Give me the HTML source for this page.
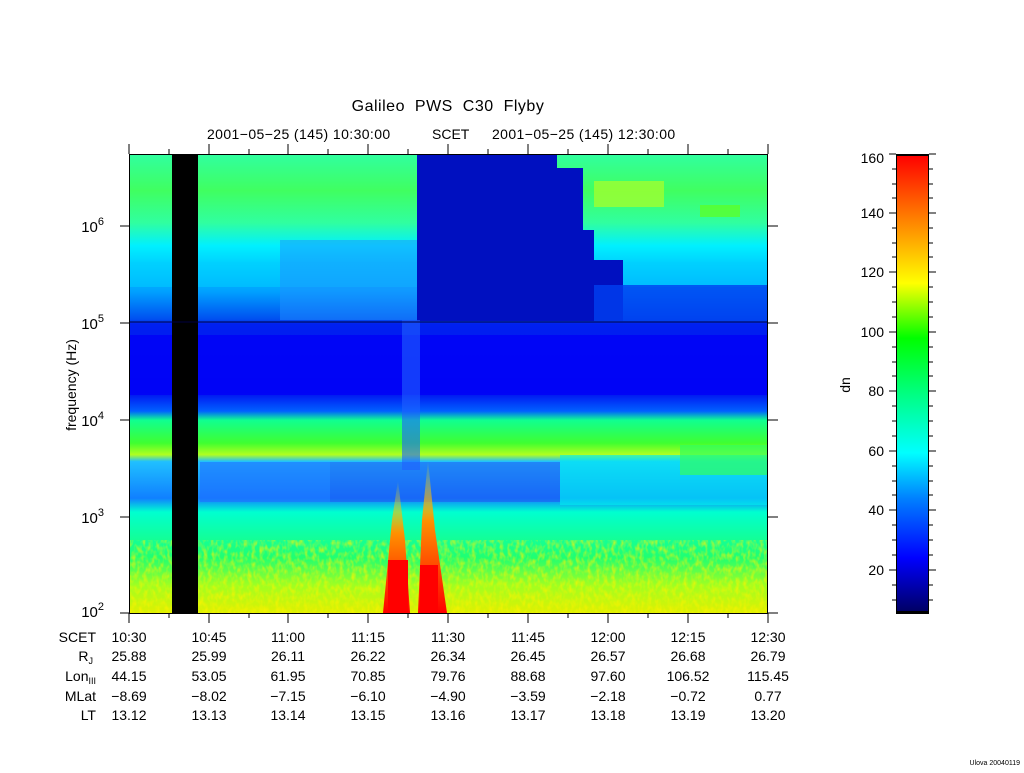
<!DOCTYPE html>
<html><head><meta charset="utf-8"><style>
body{margin:0;background:#fff;width:1024px;height:768px;overflow:hidden;font-family:"Liberation Sans",sans-serif}
svg text{font-family:"Liberation Sans",sans-serif}
</style></head><body>
<svg width="1024" height="768" viewBox="0 0 1024 768" font-size="14">
<defs>
<linearGradient id="cb" x1="0" y1="1" x2="0" y2="0">
<stop offset="0" stop-color="#000060"/>
<stop offset="0.12" stop-color="#0000ff"/>
<stop offset="0.25" stop-color="#0080ff"/>
<stop offset="0.35" stop-color="#00ffff"/>
<stop offset="0.48" stop-color="#00ff80"/>
<stop offset="0.6" stop-color="#00ff00"/>
<stop offset="0.72" stop-color="#ffff00"/>
<stop offset="0.86" stop-color="#ff8000"/>
<stop offset="1" stop-color="#ff0000"/>
</linearGradient>
<linearGradient id="main" x1="0" y1="0" x2="0" y2="1">
<stop offset="0" stop-color="#30ffa0"/>
<stop offset="0.08" stop-color="#40ff60"/>
<stop offset="0.15" stop-color="#30ffa0"/>
<stop offset="0.2" stop-color="#00f0ff"/>
<stop offset="0.3" stop-color="#00a0ff"/>
<stop offset="0.36" stop-color="#0050f0"/>
<stop offset="0.37" stop-color="#0020f0"/>
<stop offset="0.52" stop-color="#0010f0"/>
<stop offset="0.56" stop-color="#0060ff"/>
<stop offset="0.58" stop-color="#10ff90"/>
<stop offset="0.63" stop-color="#40ff30"/>
<stop offset="0.655" stop-color="#b0ff20"/>
<stop offset="0.67" stop-color="#20c0ff"/>
<stop offset="0.75" stop-color="#1080ff"/>
<stop offset="0.78" stop-color="#00ffd0"/>
<stop offset="0.88" stop-color="#20ff70"/>
<stop offset="0.94" stop-color="#a0ff20"/>
<stop offset="1" stop-color="#e0f000"/>
</linearGradient>
<linearGradient id="red" x1="0" y1="0" x2="0" y2="1">
<stop offset="0" stop-color="#ffff00" stop-opacity="0"/>
<stop offset="0.4" stop-color="#ff9000"/>
<stop offset="1" stop-color="#ff0000"/>
</linearGradient>
<filter id="n" filterUnits="userSpaceOnUse" x="129" y="540" width="639" height="73"><feTurbulence type="fractalNoise" baseFrequency="0.25 0.15" numOctaves="2" seed="3"/><feColorMatrix values="0 0 0 0 1  0 0 0 0 0.9  0 0 0 0 0  0 0 0 1.4 -0.55"/></filter>
<clipPath id="pc"><rect x="129" y="154" width="639" height="459"/></clipPath>
</defs>
<g clip-path="url(#pc)">
<rect x="129" y="154" width="639" height="459" fill="url(#main)"/>
<rect x="129" y="262" width="639" height="25" fill="#00d0ff" opacity="0.5"/>
<rect x="594" y="181" width="70" height="26" fill="#a0ff30" opacity="0.8"/>
<rect x="700" y="205" width="40" height="12" fill="#60ff20" opacity="0.7"/>
<path d="M417 154 H557 V168 H583 V230 H594 V260 H623 V321 H417 Z" fill="#0010c0"/>
<rect x="594" y="285" width="174" height="36" fill="#0040f0" opacity="0.8"/>
<rect x="280" y="240" width="137" height="80" fill="#2090ff" opacity="0.5"/>
<rect x="129" y="335" width="639" height="60" fill="#0000f8" opacity="0.8"/>
<rect x="200" y="462" width="130" height="40" fill="#2070ff" opacity="0.6"/>
<rect x="330" y="462" width="230" height="40" fill="#2050f0" opacity="0.5"/>
<rect x="560" y="455" width="208" height="50" fill="#00f0f0" opacity="0.6"/>
<rect x="680" y="445" width="88" height="30" fill="#30ff60" opacity="0.7"/>
<rect x="129" y="540" width="639" height="73" fill="#ffff00" filter="url(#n)"/>
<path d="M383 613 L392 520 L398 480 L405 540 L410 613 Z" fill="url(#red)"/>
<path d="M418 613 L422 520 L428 460 L435 530 L447 613 Z" fill="url(#red)"/>
<rect x="388" y="560" width="20" height="53" fill="#ff0000"/>
<rect x="420" y="565" width="18" height="48" fill="#ff0000"/>
<rect x="402" y="320" width="18" height="150" fill="#2060ff" opacity="0.6"/>
<rect x="172" y="154" width="26" height="459" fill="#000"/>
<line x1="129" y1="322" x2="768" y2="322" stroke="#000040" stroke-width="1"/>
</g>
<rect x="129.5" y="154.5" width="638" height="459" fill="none" stroke="#000"/>
<g stroke="#000">
<line x1="120" y1="226" x2="129" y2="226"/><line x1="768" y1="226" x2="778" y2="226"/>
<line x1="120" y1="323" x2="129" y2="323"/><line x1="768" y1="323" x2="778" y2="323"/>
<line x1="120" y1="420" x2="129" y2="420"/><line x1="768" y1="420" x2="778" y2="420"/>
<line x1="120" y1="517" x2="129" y2="517"/><line x1="768" y1="517" x2="778" y2="517"/>
<line x1="120" y1="613" x2="129" y2="613"/><line x1="768" y1="613" x2="778" y2="613"/>
<path d="M129 613v10M209 613v10M288 613v10M368 613v10M448 613v10M528 613v10M608 613v10M688 613v10M768 613v10M129 154v-10M209 154v-10M288 154v-10M368 154v-10M448 154v-10M528 154v-10M608 154v-10M688 154v-10M768 154v-10"/>
<path d="M169 613v5M249 613v5M328 613v5M408 613v5M488 613v5M568 613v5M648 613v5M728 613v5M169 154v-5M249 154v-5M328 154v-5M408 154v-5M488 154v-5M568 154v-5M648 154v-5M728 154v-5"/>
</g>
<text x="448" y="111" text-anchor="middle" font-size="16" letter-spacing="0.5" word-spacing="5">Galileo PWS C30 Flyby</text>
<text x="207" y="139" letter-spacing="0.4">2001−05−25 (145) 10:30:00</text>
<text x="432" y="139">SCET</text>
<text x="492" y="139" letter-spacing="0.4">2001−05−25 (145) 12:30:00</text>
<g text-anchor="end" font-size="15">
<text x="104" y="232">10<tspan dy="-7" font-size="11">6</tspan></text>
<text x="104" y="329">10<tspan dy="-7" font-size="11">5</tspan></text>
<text x="104" y="426">10<tspan dy="-7" font-size="11">4</tspan></text>
<text x="104" y="523">10<tspan dy="-7" font-size="11">3</tspan></text>
<text x="104" y="617">10<tspan dy="-7" font-size="11">2</tspan></text>
</g>
<text transform="translate(76,385) rotate(-90)" text-anchor="middle">frequency (Hz)</text>
<g text-anchor="end">
<text x="96" y="642">SCET</text>
<text x="93" y="661">R<tspan font-size="9" dy="3">J</tspan></text>
<text x="96" y="681">Lon<tspan font-size="9" dy="3">III</tspan></text>
<text x="96" y="701">MLat</text>
<text x="96" y="720">LT</text>
</g>
<g text-anchor="middle">
<text x="129" y="642">10:30</text><text x="209" y="642">10:45</text><text x="288" y="642">11:00</text><text x="368" y="642">11:15</text><text x="448" y="642">11:30</text><text x="528" y="642">11:45</text><text x="608" y="642">12:00</text><text x="688" y="642">12:15</text><text x="768" y="642">12:30</text>
<text x="129" y="661">25.88</text><text x="209" y="661">25.99</text><text x="288" y="661">26.11</text><text x="368" y="661">26.22</text><text x="448" y="661">26.34</text><text x="528" y="661">26.45</text><text x="608" y="661">26.57</text><text x="688" y="661">26.68</text><text x="768" y="661">26.79</text>
<text x="129" y="681">44.15</text><text x="209" y="681">53.05</text><text x="288" y="681">61.95</text><text x="368" y="681">70.85</text><text x="448" y="681">79.76</text><text x="528" y="681">88.68</text><text x="608" y="681">97.60</text><text x="688" y="681">106.52</text><text x="768" y="681">115.45</text>
<text x="129" y="701">−8.69</text><text x="209" y="701">−8.02</text><text x="288" y="701">−7.15</text><text x="368" y="701">−6.10</text><text x="448" y="701">−4.90</text><text x="528" y="701">−3.59</text><text x="608" y="701">−2.18</text><text x="688" y="701">−0.72</text><text x="768" y="701">0.77</text>
<text x="129" y="720">13.12</text><text x="209" y="720">13.13</text><text x="288" y="720">13.14</text><text x="368" y="720">13.15</text><text x="448" y="720">13.16</text><text x="528" y="720">13.17</text><text x="608" y="720">13.18</text><text x="688" y="720">13.19</text><text x="768" y="720">13.20</text>
</g>
<rect x="896" y="155" width="33" height="458" fill="url(#cb)"/>
<rect x="896.5" y="154.5" width="32" height="459" fill="none" stroke="#000"/>
<line x1="896" y1="155" x2="929" y2="155" stroke="#000" stroke-width="2"/>
<line x1="896" y1="612" x2="929" y2="612" stroke="#000" stroke-width="2"/>
<g stroke="#000">
<path d="M889 154h7M889 213h7M889 272h7M889 332h7M889 391h7M889 451h7M889 510h7M889 570h7M929 154h7M929 213h7M929 272h7M929 332h7M929 391h7M929 451h7M929 510h7M929 570h7"/>
<path d="M892 169h4M892 184h4M892 198h4M892 228h4M892 243h4M892 257h4M892 287h4M892 302h4M892 317h4M892 347h4M892 362h4M892 376h4M892 406h4M892 421h4M892 436h4M892 466h4M892 481h4M892 495h4M892 525h4M892 540h4M892 555h4M892 585h4M892 600h4M929 169h4M929 184h4M929 198h4M929 228h4M929 243h4M929 257h4M929 287h4M929 302h4M929 317h4M929 347h4M929 362h4M929 376h4M929 406h4M929 421h4M929 436h4M929 466h4M929 481h4M929 495h4M929 525h4M929 540h4M929 555h4M929 585h4M929 600h4"/>
</g>
<g text-anchor="end">
<text x="884" y="163">160</text><text x="884" y="218">140</text><text x="884" y="277">120</text><text x="884" y="337">100</text><text x="884" y="396">80</text><text x="884" y="456">60</text><text x="884" y="515">40</text><text x="884" y="575">20</text>
</g>
<text transform="translate(850,385) rotate(-90)" text-anchor="middle">dn</text>
<text x="1020" y="765" text-anchor="end" font-size="7">Ulova 20040119</text>
</svg>
</body></html>
